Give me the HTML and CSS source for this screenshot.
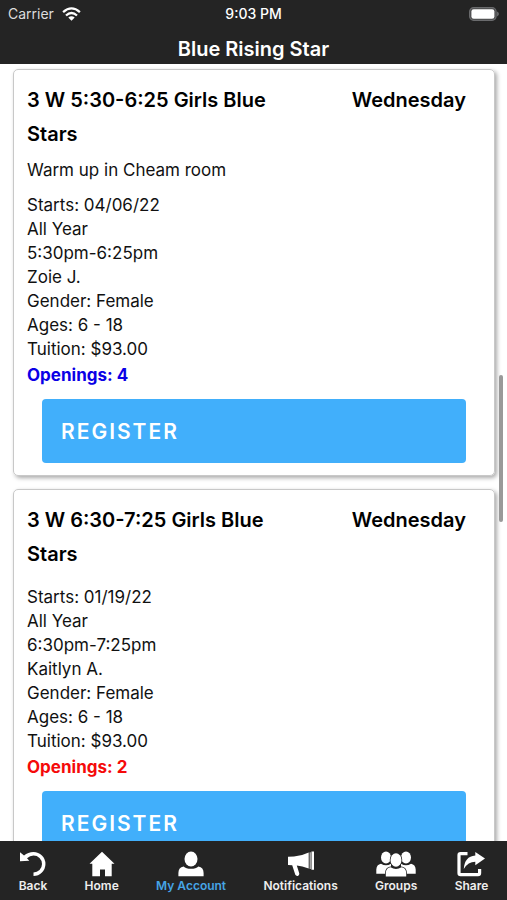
FILE: index.html
```html
<!DOCTYPE html>
<html lang="en">
<head>
<meta charset="utf-8">
<meta name="viewport" content="width=device-width, initial-scale=1">
<title>Blue Rising Star</title>
<link rel="stylesheet" href="styles.css">
</head>
<body>
<div class="app">
  <header class="header">
    <div class="status">
      <div class="carrier">
        <span>Carrier</span>
        <svg width="19" height="14" viewBox="0 0 19 14" fill="none" stroke="#fff" stroke-width="2.3" aria-hidden="true">
          <path d="M1.1 5.2Q9.5-2.4 17.9 5.2"/>
          <path d="M4 8.5Q9.500 3.500 15 8.500"/>
          <path d="M9.500 13.700L6.300 10.600Q9.500 8 12.700 10.600Z" fill="#fff" stroke="none"/>
        </svg>
      </div>
      <div class="clock">9:03 PM</div>
      <svg class="battery" width="31" height="14" viewBox="0 0 31 14" aria-hidden="true">
        <rect x="1.600" y="0.700" width="26.500" height="12.600" rx="4" fill="#4a4a4b" stroke="#6a6b6d" stroke-width="1.200"/>
        <rect x="3.400" y="2.300" width="23" height="9.400" rx="2.300" fill="#fff"/>
        <path d="M29.200 4.600Q30.800 5.500 30.800 7T29.200 9.400Z" fill="#77787a"/>
      </svg>
    </div>
    <h1 class="title">Blue Rising Star</h1>
  </header>

  <main class="classes">
    <article class="card">
      <div class="card-head">
        <h2 class="card-title">3 W 5:30-6:25 Girls Blue Stars</h2>
        <span class="card-day">Wednesday</span>
      </div>
      <p class="note">Warm up in Cheam room</p>
      <ul class="details">
        <li>Starts: 04/06/22</li>
        <li>All Year</li>
        <li>5:30pm-6:25pm</li>
        <li>Zoie J.</li>
        <li>Gender: Female</li>
        <li>Ages: 6 - 18</li>
        <li>Tuition: $93.00</li>
        <li class="openings">Openings: 4</li>
      </ul>
      <button class="register" type="button">REGISTER</button>
    </article>

    <article class="card">
      <div class="card-head">
        <h2 class="card-title">3 W 6:30-7:25 Girls Blue Stars</h2>
        <span class="card-day">Wednesday</span>
      </div>
      <ul class="details">
        <li>Starts: 01/19/22</li>
        <li>All Year</li>
        <li>6:30pm-7:25pm</li>
        <li>Kaitlyn A.</li>
        <li>Gender: Female</li>
        <li>Ages: 6 - 18</li>
        <li>Tuition: $93.00</li>
        <li class="openings openings-low">Openings: 2</li>
      </ul>
      <button class="register" type="button">REGISTER</button>
    </article>
    <div class="scroll-thumb"></div>
  </main>

  <nav class="tabs">
    <a class="tab" href="#back">
      <svg width="27" height="26" viewBox="0 0 27 26" aria-hidden="true">
        <path d="M5 4.500Q9 1 14.500 1A11.900 11.900 0 0 1 14.500 24.900V21.500A8.500 8.500 0 0 0 14.500 4.500Q11 4.500 8 7.300L10.300 9.800L1 10.200V1.200L3.500 3.300Z"/>
      </svg>
      <span>Back</span>
    </a>
    <a class="tab" href="#home">
      <svg width="26" height="26" viewBox="0 0 26 26" aria-hidden="true">
        <path d="M13 .8L25.500 12.800H22.700V25.200H16V18.500H11V25.200H3.300V12.800H.5Z"/>
      </svg>
      <span>Home</span>
    </a>
    <a class="tab tab-active" href="#account">
      <svg width="26" height="26" viewBox="0 0 26 26" aria-hidden="true">
        <ellipse cx="13" cy="8" rx="6.500" ry="7.600"/>
        <path d="M.4 25.200V22Q.4 16 5.600 15.400Q8 17.800 13 17.800T20.400 15.400Q25.600 16 25.600 22V25.200Z"/>
      </svg>
      <span>My Account</span>
    </a>
    <a class="tab" href="#notifications">
      <svg width="28" height="26" viewBox="0 0 28 26" aria-hidden="true">
        <path d="M1 5.800L7 5.600Q15 4.800 21.700 1.500V17.500Q15 14.800 9.800 14.500L12.300 22.500Q12.500 24.500 10.800 24.900Q9 25.200 8.300 23.800L5.200 14.200L1 14Z"/>
        <path d="M22.700 1.200H23.600V17.900H22.700ZM24.500.5H27V18.700H24.500Z"/>
      </svg>
      <span>Notifications</span>
    </a>
    <a class="tab" href="#groups">
      <svg width="40" height="26" viewBox="0 0 40 26" aria-hidden="true">
        <ellipse cx="10" cy="6.500" rx="5" ry="6"/>
        <ellipse cx="30" cy="6.500" rx="5" ry="6"/>
        <path d="M.3 22.800V18.500Q.6 13.500 5 12.700Q10 16 15 12.700V22.800ZM39.700 22.800V18.500Q39.400 13.500 35 12.700Q30 16 25 12.700V22.800Z"/>
        <g stroke="#242424" stroke-width="1.500" paint-order="stroke">
          <path d="M9.800 25.400V22Q10 17 14.500 16.300Q20 19.700 25.500 16.300Q30 17 30.200 22V25.400Z"/>
          <ellipse cx="20" cy="9" rx="5.500" ry="6.700"/>
        </g>
      </svg>
      <span>Groups</span>
    </a>
    <a class="tab" href="#share">
      <svg width="30" height="26" viewBox="0 0 30 26" aria-hidden="true">
        <path d="M11.500 2.600H4.500Q3 2.600 3 4.200V22Q3 23.600 4.500 23.600H22Q23.600 23.600 23.600 22V18" fill="none" stroke="#fff" stroke-width="3.200"/>
        <path d="M19.300 1L29 7.500L19.300 14.200V10.800Q12 10.800 7.800 18Q8.400 5.500 19.300 4.500Z"/>
      </svg>
      <span>Share</span>
    </a>
  </nav>
</div>
</body>
</html>
```

FILE: styles.css
```css
* {
  box-sizing: border-box;
}

body,
h1,
h2,
p,
ul {
  margin: 0;
  padding: 0;
}

body {
  background: #fff;
  color: #111;
  font-family: Inter, "Liberation Sans", sans-serif;
}

.app {
  display: flex;
  flex-direction: column;
  height: 100vh;
}

.header {
  flex: none;
  background: #242424;
  color: #fff;
}

.status {
  display: grid;
  grid-template-columns: 1fr auto 1fr;
  align-items: center;
  height: 28px;
  padding: 0 8px;
  font-size: 14px;
  line-height: 20px;
}

.carrier {
  display: flex;
  align-items: center;
  gap: 8px;
  color: #ddd;
}

.clock {
  font-weight: 500;
}

.battery {
  justify-self: end;
}

.title {
  padding: 8px 0 2px;
  font-size: 20px;
  font-weight: 600;
  line-height: 26px;
  text-align: center;
}

.classes {
  position: relative;
  flex: 1;
  min-height: 0;
  overflow: hidden;
  padding: 5px 12px 0 13px;
}

.card {
  margin-bottom: 13px;
  padding: 13px 28px 12px 13px;
  border: 1px solid #c8c8c8;
  border-radius: 5px;
  box-shadow: 2px 2px 4px #aaa;
}

.card-head {
  display: flex;
  justify-content: space-between;
  gap: 80px;
  color: #000;
  font-size: 20px;
  font-weight: 600;
  line-height: 34px;
}

.card-title {
  font-size: 20px;
  font-weight: 600;
}

.note {
  margin: 7px 0 -3px;
  font-size: 17px;
  line-height: 24px;
}

.details {
  padding: 14px 0 12px;
  font-size: 17px;
  line-height: 24px;
  list-style: none;
}

.openings {
  padding-top: 2px;
  color: #0a00e6;
  font-weight: 700;
}

.openings-low {
  color: #f50a0a;
}

.register {
  display: block;
  width: calc(100% - 15px);
  margin-left: 15px;
  padding: 18px 19px 16px;
  border: 0;
  border-radius: 4px;
  background: #41affb;
  color: #fff;
  font-family: inherit;
  font-size: 21px;
  font-weight: 600;
  letter-spacing: 2px;
  line-height: 30px;
  text-align: left;
}

.scroll-thumb {
  position: absolute;
  top: 40%;
  right: 4px;
  width: 4px;
  height: 19%;
  border-radius: 2px;
  background: #999;
}

.tabs {
  display: flex;
  flex: none;
  justify-content: space-around;
  padding: 10px 0 6px;
  background: #242424;
}

.tab {
  display: flex;
  flex-direction: column;
  align-items: center;
  color: #eee;
  font-size: 12px;
  font-weight: 600;
  line-height: 17px;
  text-decoration: none;
}

.tab svg {
  fill: #fff;
}

.tab-active {
  color: #46a5e6;
}
```
